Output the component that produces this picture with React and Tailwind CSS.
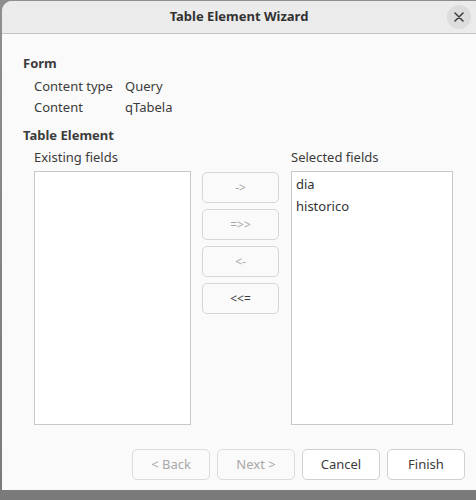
import React from "react";

const font = { fontFamily: '"Noto Sans", "DejaVu Sans", sans-serif' };

const SideButton = ({ label, disabled }) => (
  <button
    type="button"
    className={
      "h-[31px] w-[77px] rounded-[5px] border border-[#d6d6d6] bg-[#fafafa] text-[12px] " +
      (disabled ? "text-[#a8a8a8]" : "text-[#3c3c3c]")
    }
  >
    {label}
  </button>
);

const FooterButton = ({ label, disabled }) => (
  <button
    type="button"
    className={
      "h-[31px] w-[78px] rounded-[5px] border text-[13px] " +
      (disabled
        ? "border-[#dcdcdc] bg-[#fafafa] text-[#a8a8a8]"
        : "border-[#d0d0d0] bg-white text-[#3c3c3c]")
    }
  >
    {label}
  </button>
);

export default function App() {
  return (
    <div
      className="w-[476px] h-[500px] overflow-hidden bg-gradient-to-b from-[#8e8e8e] to-[#7a7a7a] text-[#3c3c3c]"
      style={font}
    >
      <div className="ml-[2px] mt-[1px] w-[486px] h-[489px] rounded-t-[10px] bg-[#fafafa] overflow-hidden flex flex-col">
        {/* title bar */}
        <div className="h-[33px] shrink-0 bg-[#ebebeb] border-b border-[#c4c4c4] flex items-center relative">
          <div className="w-[474px] text-center text-[13px] font-bold text-[#323232]">
            Table Element Wizard
          </div>
          <div className="absolute left-[445px] top-[4px] w-[24px] h-[24px] rounded-full bg-[#dcdcdc] flex items-center justify-center">
            <svg width="10" height="10" viewBox="0 0 10 10">
              <path d="M1 1 L9 9 M9 1 L1 9" stroke="#3a3a3a" strokeWidth="1.5" strokeLinecap="round" />
            </svg>
          </div>
        </div>

        {/* body */}
        <div className="pl-[21px] pt-[19px] text-[13px]">
          <div className="font-bold leading-[20px]">Form</div>
          <div className="pl-[11px] mt-[3px] grid grid-cols-[91px_1fr] gap-y-[1px] leading-[20px]">
            <div>Content type</div>
            <div>Query</div>
            <div>Content</div>
            <div>qTabela</div>
          </div>
          <div className="font-bold leading-[20px] mt-[8px]">Table Element</div>

          <div className="pl-[11px] mt-[2px] flex">
            <div className="flex flex-col w-[157px]">
              <div className="leading-[20px]">Existing fields</div>
              <div className="mt-[4px] h-[254px] bg-white border border-[#c8c8c8]" />
            </div>
            <div className="ml-[11px] pt-[25px] flex flex-col gap-[6px]">
              <SideButton label="->" disabled />
              <SideButton label="=>>" disabled />
              <SideButton label="<-" disabled />
              <SideButton label="<<=" />
            </div>
            <div className="ml-[12px] flex flex-col w-[162px]">
              <div className="leading-[20px]">Selected fields</div>
              <div className="mt-[4px] h-[254px] bg-white border border-[#c8c8c8] pl-[4px] pt-[1px] leading-[22px] text-[#323232]">
                <div>dia</div>
                <div>historico</div>
              </div>
            </div>
          </div>

          <div className="mt-[24px] pl-[109px] flex gap-[7px]">
            <FooterButton label="< Back" disabled />
            <FooterButton label="Next >" disabled />
            <FooterButton label="Cancel" />
            <FooterButton label="Finish" />
          </div>
        </div>
      </div>
    </div>
  );
}
